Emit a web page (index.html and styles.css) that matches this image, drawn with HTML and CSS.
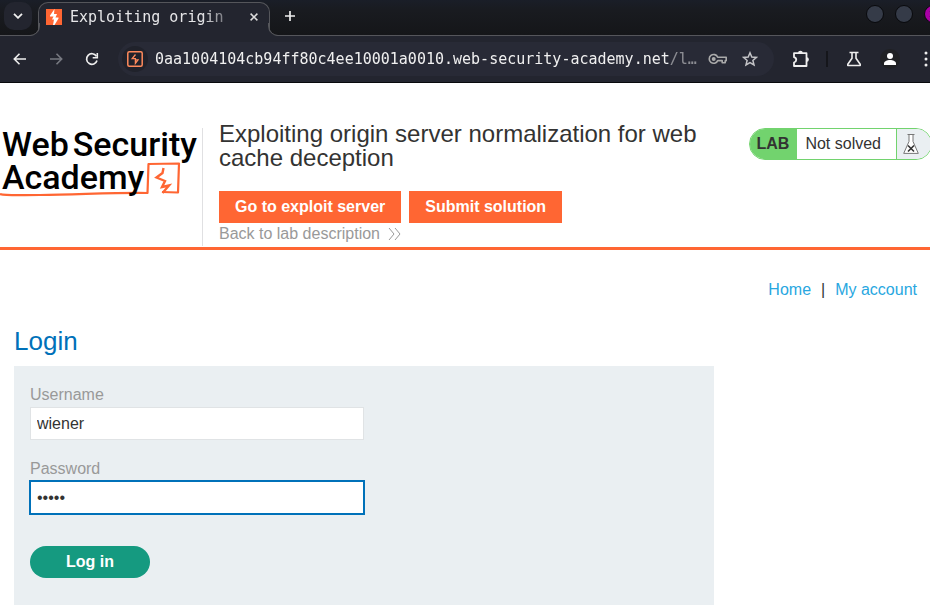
FILE: index.html
```html
<!DOCTYPE html>
<html lang="en">
<head>
<meta charset="utf-8">
<title>Exploiting origin server normalization for web cache deception</title>
<link rel="stylesheet" href="styles.css">
</head>
<body>
<div class="browser">
  <div class="tabstrip">
    <button class="tab-search" aria-label="Search tabs"><svg width="10" height="6" viewBox="0 0 10 6"><path d="M1 .8l4 4 4-4" fill="none" stroke="#f0f0f0" stroke-width="1.8"/></svg></button>
    <div class="tab">
      <svg width="16" height="16" viewBox="0 0 16 16"><path fill="#ff6633" d="M0 0h16v16H0z"/><path fill="#fff" d="M8.500 0 4 6.500V7.500H7.500L6 10.500H8L7 16H8.500L12.500 9.500V8.500H9.500L11 5H8Z"/></svg>
      <span class="tab-title">Exploiting origin</span>
      <button class="tab-close" aria-label="Close tab"><svg width="8" height="8" viewBox="0 0 8 8"><path d="M.6.6l6.800 6.800M7.400.6L.6 7.400" stroke="#ddd" stroke-width="1.500"/></svg></button>
    </div>
    <button class="tab-new" aria-label="New tab"><svg width="12" height="12" viewBox="0 0 12 12"><path d="M6 1v10M1 6h10" stroke="#eee" stroke-width="1.700"/></svg></button>
    <div class="window-controls">
      <button class="window-dot" aria-label="Minimize"></button>
      <button class="window-dot" aria-label="Maximize"></button>
      <button class="window-dot window-dot-close" aria-label="Close"><svg width="8" height="8" viewBox="0 0 8 8"><path d="M1 1l6 6M7 1L1 7" stroke="#30002f" stroke-width="1.500"/></svg></button>
    </div>
  </div>
  <div class="toolbar">
    <button class="tool" aria-label="Back"><svg width="14" height="12" viewBox="0 0 14 12"><path d="M6.500 .8L1.300 6l5.200 5.200M1.300 6H13" fill="none" stroke="#eee" stroke-width="1.600"/></svg></button>
    <button class="tool" aria-label="Forward"><svg width="14" height="12" viewBox="0 0 14 12"><path d="M7.500 .8L12.700 6l-5.200 5.200M12.700 6H1" fill="none" stroke="#777981" stroke-width="1.600"/></svg></button>
    <button class="tool" aria-label="Reload"><svg width="14" height="14" viewBox="0 0 14 14"><path d="M12 8.500A5.300 5.300 0 1 1 11.400 4.200" fill="none" stroke="#eee" stroke-width="1.700"/><path d="M12.300 1v4.700H7.700" fill="none" stroke="#eee" stroke-width="1.600"/></svg></button>
    <div class="address">
      <button class="site-info" aria-label="Site information"><svg width="16" height="16" viewBox="0 0 16 16"><rect x=".8" y=".8" width="14.400" height="14.400" rx="1.500" fill="none" stroke="#ff8a5c" stroke-width="1.500"/><path d="M8.500 3.500L5.200 7.600h3.200v4.700l2.600-3.500H8.500" fill="none" stroke="#ff8a5c" stroke-width="1.300"/></svg></button>
      <input class="url" type="text" aria-label="Address" value="0aa1004104cb94ff80c4ee10001a0010.web-security-academy.net/l…">
      <button class="address-tool" aria-label="Passwords"><svg width="20" height="12" viewBox="0 0 20 12"><path d="M9.700 4.200H18.200v3.600h-1v2h-3V7.600H9.700A4.400 4.400 0 1 1 9.700 4.200z" fill="none" stroke="#aaa" stroke-width="1.600" stroke-linejoin="round"/><circle cx="5.700" cy="5.900" r="2" fill="#aaa"/></svg></button>
      <button class="address-tool" aria-label="Bookmark"><svg width="16" height="16" viewBox="0 0 16 16"><path d="M8 1.800l1.800 4.200 4.600.4-3.500 3 1.100 4.500L8 11.500l-4 2.400 1.100-4.500-3.500-3 4.600-.4z" fill="none" stroke="#c4c4c7" stroke-width="1.500"/></svg></button>
    </div>
    <div class="tools">
      <button class="tool" aria-label="Extensions"><svg width="18" height="18" viewBox="0 0 18 18"><path d="M2 3.200H14.500V16H2V12.500C5 11.500 5 8 2 7.200Z" fill="none" stroke="#eee" stroke-width="1.800" stroke-linejoin="round"/><path d="M6 3.200a2.400 2.400 0 0 1 4.800 0zM14.500 7.200a2.400 2.400 0 0 1 0 4.800z" fill="#eee"/></svg></button>
      <span class="tool-divider"></span>
      <button class="tool" aria-label="Labs"><svg width="16" height="16" viewBox="0 0 16 16"><path d="M3.500 1.500h9M6 2v5.200L1.800 13.200v1.300h12.400v-1.300L10 7.200V2" fill="none" stroke="#eee" stroke-width="1.600" stroke-linejoin="round"/></svg></button>
      <button class="tool" aria-label="Profile"><svg width="20" height="20" viewBox="0 0 20 20"><circle cx="10" cy="10" r="10" fill="#202124"/><circle cx="10" cy="7" r="3" fill="#fff"/><path d="M4 16v-1.500c0-2 3-3.500 6-3.500s6 1.500 6 3.500V16z" fill="#fff"/></svg></button>
      <button class="tool" aria-label="Menu"><svg width="4" height="16" viewBox="0 0 4 16" fill="#eee"><circle cx="2" cy="2" r="1.500"/><circle cx="2" cy="8" r="1.500"/><circle cx="2" cy="14" r="1.500"/></svg></button>
    </div>
  </div>
</div>

<header class="lab-header">
  <a class="logo" href="#">
    <svg class="logo-mark" width="182" height="70" viewBox="0 0 182 70"><path d="M0 66C6 68 20 67 40 67 80 66.500 115 64.500 147.500 65L148.500 36 179 35.500 178 64.500 162 64" fill="none" stroke="#ff6633" stroke-width="2.200" stroke-linejoin="round"/><path d="M163.500 40L162.500 45 156.500 49.500 165 53 162 59 169 57.500 162.500 65" fill="none" stroke="#ff6633" stroke-width="2.400"/></svg>
    <span class="logo-line"><span>Web</span><span>Security</span></span>
    <span class="logo-line">Academy</span>
  </a>
  <div class="lab-title">
    <h2>Exploiting origin server normalization for web cache deception</h2>
    <div class="lab-actions">
      <a class="lab-button" href="#">Go to exploit server</a>
      <button class="lab-button" type="button">Submit solution</button>
    </div>
    <a class="back-link" href="#">Back to lab description <svg width="13" height="12" viewBox="0 0 13 12"><path d="M1 0l5 6-5 6M7 0l5 6-5 6" fill="none" stroke="#999" stroke-width="1"/></svg></a>
  </div>
  <div class="lab-status">
    <strong>LAB</strong>
    <span class="lab-state">Not solved</span>
    <span class="lab-flask"><svg width="16" height="20" viewBox="0 0 16 20"><path d="M4.500 .5h7M6 .5v7L.7 19.400h14.600L10 7.500v-7" fill="#fff" stroke="#777" stroke-width="1"/><path d="M5 11.500l6 6M11 11.500l-6 6" stroke="#333" stroke-width="1.600"/></svg></span>
  </div>
</header>

<main>
  <nav class="account-nav">
    <a href="#">Home</a><span>|</span><a href="#">My account</a>
  </nav>
  <h1>Login</h1>
  <form class="login-form">
    <label for="username">Username</label>
    <input id="username" type="text" value="wiener">
    <label for="password">Password</label>
    <input id="password" class="is-active" type="password" value="peter">
    <button type="submit">Log in</button>
  </form>
</main>
</body>
</html>
```
FILE: styles.css
```css
* {
  box-sizing: border-box;
}

body {
  margin: 0;
  background: #fff;
  color: #333332;
  font: 16px/20px "Liberation Sans", Arial, sans-serif;
  overflow: hidden;
}

a {
  text-decoration: none;
}

button {
  border: 0;
  padding: 0;
  background: none;
  font: inherit;
}

svg {
  display: block;
}

/* Browser window */
.browser {
  font-family: "DejaVu Sans Mono", monospace;
  font-size: 15px;
  border-bottom: 1px solid #08090c;
  overflow: hidden;
}

.tabstrip {
  display: flex;
  align-items: flex-start;
  height: 36px;
  background: linear-gradient(#1a1e28, #191b20 30%, #151619);
  border-bottom: 1px solid #55565b;
}

.tab-search,
.tab-new,
.tool,
.address-tool,
.site-info,
.tab-close {
  display: grid;
  place-items: center;
  flex: none;
}

.tab-search {
  width: 28px;
  height: 28px;
  margin: 2px 6px 0 4px;
  border-radius: 10px;
  background: #23252f;
}

.tab {
  position: relative;
  display: flex;
  align-items: center;
  flex: none;
  width: 232px;
  height: 34px;
  margin-top: 2px;
  padding: 0 7px 6px;
  border: 1px solid #55565b;
  border-bottom: 0;
  border-radius: 10px 10px 0 0;
  background: #23252f;
}

.tab::before,
.tab::after {
  content: "";
  position: absolute;
  bottom: 0;
  width: 12px;
  height: 12px;
  border: 0 solid #55565b;
  border-bottom-width: 1px;
}

.tab::before {
  left: -12px;
  border-right-width: 1px;
  border-bottom-right-radius: 10px;
  box-shadow: 4px 4px 0 #23252f;
  clip-path: inset(0);
}

.tab::after {
  right: -12px;
  border-left-width: 1px;
  border-bottom-left-radius: 10px;
  box-shadow: -4px 4px 0 #23252f;
  clip-path: inset(0);
}

.tab-title {
  flex: 1;
  margin-left: 8px;
  color: #e6e6e8;
  line-height: 18px;
  white-space: nowrap;
  mask-image: linear-gradient(90deg, #000 75%, rgba(0, 0, 0, .2) 93%);
}

.tab-close {
  width: 16px;
  height: 16px;
}

.tab-new {
  width: 28px;
  height: 28px;
  margin: 2px 0 0 6px;
}

.window-controls {
  display: flex;
  gap: 11px;
  margin: 5px -12px 0 auto;
}

.window-dot {
  display: grid;
  place-items: center;
  width: 18px;
  height: 18px;
  border: 1px solid #08090c;
  border-radius: 50%;
  background: #353b48;
}

.window-dot-close {
  background: #a800a5;
}

.toolbar {
  display: flex;
  align-items: center;
  height: 46px;
  padding-left: 2px;
  background: #23252f;
}

.tool {
  width: 36px;
  height: 34px;
}

.address {
  display: flex;
  align-items: center;
  flex: 1;
  min-width: 0;
  height: 34px;
  margin: 0 9px 0 8px;
  padding: 0 8px 0 4px;
  border-radius: 17px;
  background: #282a36;
}

.site-info {
  width: 26px;
  height: 26px;
  border-radius: 50%;
  background: #20222b;
}

.url {
  flex: 1;
  min-width: 0;
  margin-left: 7px;
  padding: 0;
  border: 0;
  outline: 0;
  background: none;
  color: #f0f0f0;
  font: inherit;
  mask-image: linear-gradient(90deg, #000 515px, rgba(0, 0, 0, .5) 515px);
}

.address-tool {
  width: 32px;
  height: 32px;
}

.tools {
  display: flex;
  align-items: center;
  margin-right: -14px;
}

.tool-divider {
  width: 2px;
  height: 16px;
  margin: 0 8px 0 7px;
  background: #15161b;
}

/* Lab banner */
.lab-header {
  display: flex;
  align-items: flex-start;
  padding-top: 39px;
  border-bottom: 3px solid #ff6633;
  overflow: hidden;
}

.logo {
  position: relative;
  flex: none;
  width: 203px;
  height: 118px;
  margin-top: 6px;
  padding-left: 2px;
  border-right: 1px solid #e0e0e2;
  color: #000;
  font: 500 34px/33px Roboto, sans-serif;
}

.logo-mark {
  position: absolute;
  left: 0;
  top: 0;
}

.logo-line {
  position: relative;
  display: flex;
  gap: 4px;
}

.lab-title {
  flex: 1;
  min-width: 0;
  padding-left: 16px;
}

.lab-title h2 {
  margin: 0 0 21px;
  font-size: 24px;
  font-weight: 400;
  line-height: 24px;
}

.lab-actions {
  display: flex;
  gap: 8px;
}

.lab-button {
  height: 32px;
  padding: 0 16px;
  background: #ff6633;
  color: #fff;
  font-weight: 700;
  line-height: 32px;
}

.back-link {
  display: flex;
  align-items: center;
  gap: 8px;
  color: #999;
  line-height: 22px;
  margin-bottom: 2px;
}

.lab-status {
  display: flex;
  flex: none;
  height: 32px;
  margin: 6px -2px 0 0;
  border: 1px solid #72d36e;
  border-radius: 16px;
  background: #fff;
  line-height: 30px;
  overflow: hidden;
}

.lab-status strong {
  padding: 0 8px 0 7px;
  background: #72d36e;
}

.lab-state {
  padding: 0 15px 0 8px;
}

.lab-flask {
  padding: 5px 12px 0 6px;
  border-left: 1px solid #72d36e;
  background: #eaeff2;
}

/* Page */
main {
  padding: 30px 13px 0 14px;
}

.account-nav {
  display: flex;
  justify-content: flex-end;
  gap: 10px;
}

.account-nav a {
  color: #29a7df;
}

h1 {
  margin: 25px 0 9px;
  color: #0071b9;
  font-size: 26px;
  font-weight: 400;
  line-height: 32px;
}

.login-form {
  display: flex;
  flex-direction: column;
  align-items: flex-start;
  max-width: 700px;
  min-height: 260px;
  padding: 19px 16px;
  background: #eaeff2;
}

.login-form label {
  margin-bottom: 2px;
  color: #999;
}

.login-form input {
  width: 50%;
  height: 33px;
  margin-bottom: 19px;
  padding: 0 6px;
  border: 1px solid #e0e3e5;
  border-radius: 0;
  background: #fff;
  color: #333332;
  font: inherit;
}

.login-form .is-active {
  outline: 2px solid #0071b9;
  outline-offset: -1px;
}

.login-form button {
  width: 120px;
  height: 32px;
  margin-top: 13px;
  border-radius: 16px;
  background: #159a80;
  color: #fff;
  font-weight: 700;
}
```
